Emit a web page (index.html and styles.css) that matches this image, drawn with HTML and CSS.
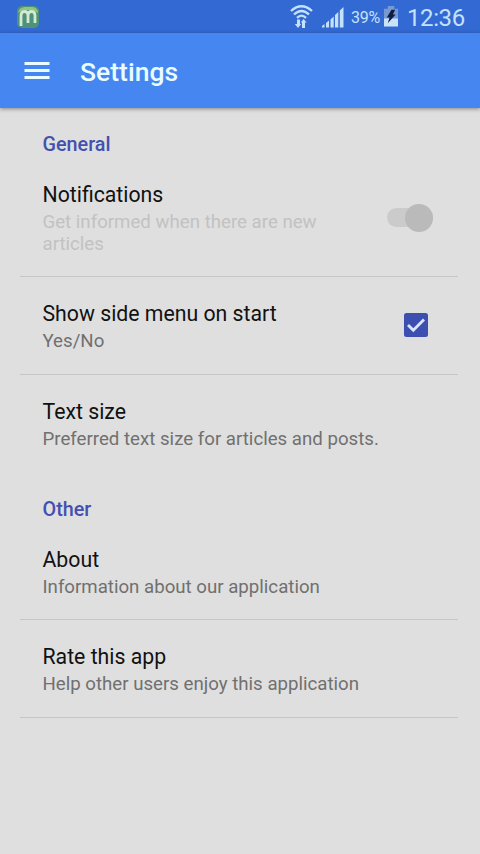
FILE: index.html
```
<!DOCTYPE html>
<html lang="en">
<head>
<meta charset="utf-8">
<title>Settings</title>
<link rel="stylesheet" href="styles.css">
</head>
<body>
<div class="status">
  <svg class="app-logo" width="24" height="24" viewBox="0 0 24 24">
    <rect x="1" y="1" width="22" height="22" rx="5" fill="#4f927b"/>
    <path d="M2 8Q3 2 9 2H17Q22 3 22 8L16 5H7Z" fill="#8fc47a"/>
    <path d="M5 21V11Q5 6.500 8.500 6.500T12 11V18M12 11Q12 6.500 15.500 6.500T19 11V18" fill="none" stroke="#d3ebd0" stroke-width="2.800"/>
  </svg>
  <svg class="wifi" width="23" height="24" viewBox="0 0 23 24">
    <g fill="none" stroke="#c4e2fb" stroke-width="2.300">
      <path d="M1 6Q11.500 -3.500 22 6"/>
      <path d="M4 9.500Q11.500 2.500 19 9.500"/>
      <path d="M7 12.800Q11.500 8.500 16 12.800"/>
    </g>
    <path d="M8 23L4.800 19H7V14.500H10V19H11.200ZM13.500 14L16.700 17.500H15V23H12V17.500H10.800Z" fill="#c4e2fb"/>
  </svg>
  <svg class="signal" width="22" height="22" viewBox="0 0 22 22">
    <path d="M0 21.500V20L2.500 18V21.500ZM4 21.500V17L7 14.500V21.500ZM8.500 21.500V13.500L11.700 10.500V21.500ZM13 21.500V9L16.300 6V21.500ZM17.800 21.500V4.500L21.500 1V21.500Z" fill="#c4e2fb"/>
  </svg>
  <span class="percent">39%</span>
  <svg class="battery" width="14" height="21" viewBox="0 0 15 22" preserveAspectRatio="none">
    <path d="M4 0H11V3H15V13H0V3H4Z" fill="#7899cf"/>
    <path d="M0 13H15V21.500H0Z" fill="#c9e3fa"/>
    <path d="M8 4H12L9.500 9H12.500L4 18L6 12H3Z" fill="#101d42"/>
  </svg>
  <span class="clock">12:36</span>
</div>
<header class="toolbar">
  <svg class="menu" width="26" height="20" viewBox="0 0 26 20">
    <path d="M0.500 2.500H25.500M0.500 9.500H25.500M0.500 16.500H25.500" stroke="#e9fcff" stroke-width="3"/>
  </svg>
  <h1>Settings</h1>
</header>
<main>
  <section class="general">
    <h2>General</h2>
    <div class="row">
      <div class="text"><h3>Notifications</h3><p class="disabled">Get informed when there are new articles</p></div>
      <div class="switch"><span class="thumb"></span></div>
    </div>
    <div class="row">
      <div class="text"><h3>Show side menu on start</h3><p>Yes/No</p></div>
      <svg class="check" width="26" height="26" viewBox="0 0 26 26">
        <rect x="1" y="1" width="24" height="24" rx="2.500" fill="#3d4fb1"/>
        <path d="M5 13L10.300 18.300L21 7.500" fill="none" stroke="#dce7ff" stroke-width="2.800"/>
      </svg>
    </div>
    <div class="row last">
      <div class="text"><h3>Text size</h3><p>Preferred text size for articles and posts.</p></div>
    </div>
  </section>
  <section>
    <h2>Other</h2>
    <div class="row">
      <div class="text"><h3>About</h3><p>Information about our application</p></div>
    </div>
    <div class="row">
      <div class="text"><h3>Rate this app</h3><p>Help other users enjoy this application</p></div>
    </div>
  </section>
</main>
</body>
</html>
```
FILE: styles.css
```
* { box-sizing: border-box; }
body {
  margin: 0;
  min-height: 854px;
  background: #dfdfdf;
  font-family: Roboto, sans-serif;
}
h1, h2, h3, p { margin: 0; }
svg { display: block; flex: none; }
.status {
  display: flex;
  align-items: center;
  height: 33px;
  padding: 0 15px 0 16px;
  background: #3369d3;
  color: #c4e2fb;
}
.wifi { margin-left: auto; }
.signal { margin-left: 9px; }
.percent {
  width: 30px;
  margin-left: 7px;
  padding-top: 2px;
  font-size: 16px;
  letter-spacing: -0.3px;
  white-space: nowrap;
}
.battery { margin-left: 3px; }
.clock {
  width: 58px;
  margin-left: 9px;
  padding-top: 3px;
  font-size: 24px;
  line-height: 33px;
  letter-spacing: -0.4px;
}
.toolbar {
  position: relative;
  display: flex;
  align-items: center;
  height: 75px;
  padding: 0 24px;
  background: #4686f0;
  box-shadow: 0 1px 4px rgba(0, 0, 0, 0.4);
}
.toolbar h1 {
  margin-left: 30px;
  padding-top: 2px;
  font-size: 26.5px;
  line-height: 32px;
  font-weight: 500;
  color: #e9fcff;
}
main { padding: 0 22px 0 20px; }
h2 {
  height: 50px;
  padding: 27px 22.5px 0;
  font-size: 19.8px;
  line-height: 22px;
  font-weight: 500;
  color: #4450b0;
}
.general h2 { height: 49px; padding-top: 26px; }
.row {
  display: flex;
  align-items: center;
  justify-content: space-between;
  padding: 22px 25px 22px 22.5px;
  border-bottom: 1px solid #c6c6c6;
}
h2 + .row {
  padding-top: 23px;
  padding-bottom: 21px;
}
.row.last { border-bottom: 0; }
.text { max-width: 340px; }
.row:has(.switch) .text { width: 300px; }
h3 {
  margin-bottom: 2px;
  font-size: 21.25px;
  line-height: 29px;
  font-weight: 400;
  color: #111;
}
p {
  font-size: 18.67px;
  line-height: 22px;
  color: #707070;
}
.disabled { color: #c2c2c2; }
.switch {
  display: flex;
  align-items: center;
  justify-content: flex-end;
  width: 46px;
  height: 19px;
  border-radius: 10px;
  background: #cbcbcb;
}
.thumb {
  flex: none;
  width: 28px;
  height: 28px;
  border-radius: 50%;
  background: #bababa;
}
.check { margin: -1px 4px 0 0; }
```
